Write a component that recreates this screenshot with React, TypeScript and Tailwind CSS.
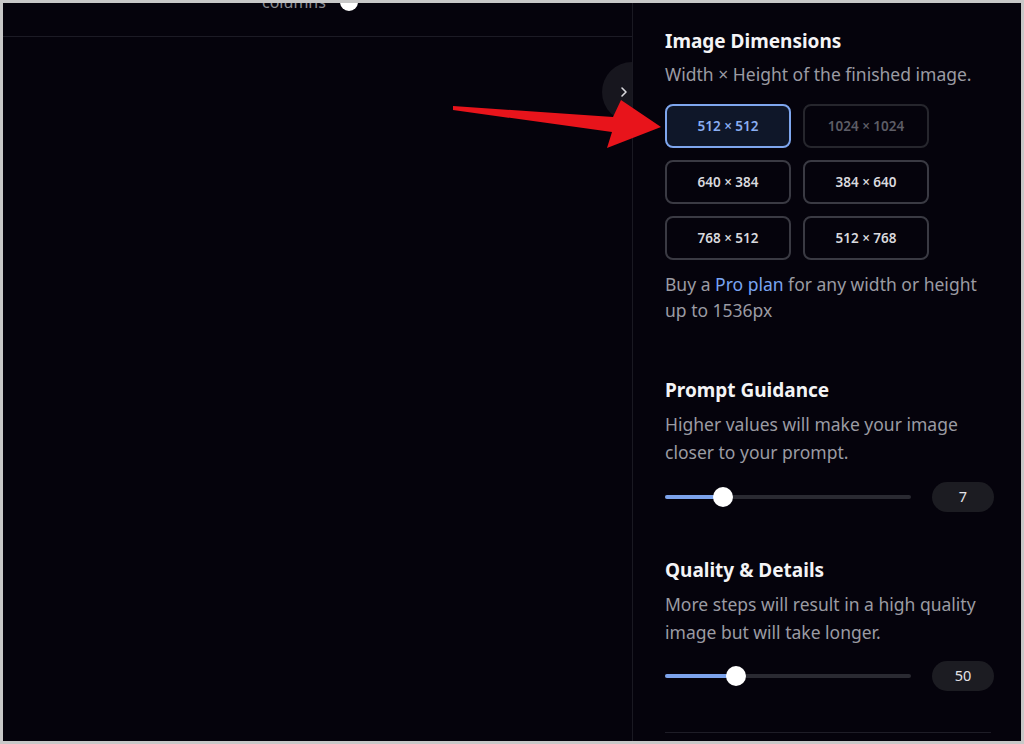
import React from "react";

const font = { fontFamily: '"Noto Sans", "Open Sans", sans-serif' };

function DimButton({ label, state }: { label: string; state: "selected" | "normal" | "disabled" }) {
  const cls =
    state === "selected"
      ? "border-[#7ea6ee] bg-[#0f1729] text-[#8aaef2]"
      : state === "disabled"
      ? "border-[#26262d] text-[#5d5d66]"
      : "border-[#3a3a43] text-[#d9d9de]";
  return (
    <div className={`h-[44px] w-[126px] rounded-[8px] border-2 flex items-center justify-center text-[13.5px] font-semibold ${cls}`}>
      {label}
    </div>
  );
}

function Slider({ fill, value }: { fill: number; value: string }) {
  return (
    <div className="flex items-center">
      <div className="relative w-[246px] h-5 flex items-center">
        <div className="w-full h-[4px] rounded-full bg-[#2a2a32]" />
        <div className="absolute left-0 top-[8px] h-[4px] rounded-full bg-[#7ca3ec]" style={{ width: fill }} />
        <div className="absolute top-0 w-5 h-5 rounded-full bg-white" style={{ left: fill - 10 }} />
      </div>
      <div className="ml-[21px] w-[62px] h-[30px] rounded-full bg-[#1c1c22] flex items-center justify-center text-[14.5px] text-[#e4e4e8]">
        {value}
      </div>
    </div>
  );
}

export default function App() {
  return (
    <div
      className="relative w-[1024px] h-[744px] border-[3px] border-[#c8c8c8] bg-[#05030c] flex overflow-hidden"
      style={font}
    >
      {/* Left area */}
      <div className="w-[629px] shrink-0 flex flex-col">
        <div className="h-[34px] border-b border-[#1c1b25] flex items-start overflow-hidden">
          <div className="ml-[259px] -mt-[13px] flex items-center">
            <span className="text-[16px] text-[#8c8c92]">columns</span>
            <div className="ml-[14px] w-[18px] h-[18px] rounded-full bg-white" />
          </div>
        </div>
        <div className="flex-1" />
      </div>

      {/* collapse button */}
      <div className="absolute left-[599px] top-[59px] w-[60px] h-[60px] rounded-full bg-[#17161e] flex items-center">
        <svg className="ml-[17px]" width="10" height="14" viewBox="0 0 10 14" fill="none">
          <path d="M3 3l4 4-4 4" stroke="#d8d8dc" strokeWidth="1.6" strokeLinecap="round" strokeLinejoin="round" />
        </svg>
      </div>

      {/* Right panel */}
      <div className="relative z-10 flex-1 min-w-0 bg-[#05030c] border-l border-[#1a1922] pl-[32px] pr-[27px] pt-[26px]">
        <div className="text-[19px] leading-[24px] font-bold text-[#f4f4f6]">Image Dimensions</div>
        <div className="mt-[8px] text-[17.5px] leading-[26px] text-[#9b9ba3]">Width × Height of the finished image.</div>
        <div className="mt-[17px] grid grid-cols-[126px_126px] gap-[12px]">
          <DimButton label="512 × 512" state="selected" />
          <DimButton label="1024 × 1024" state="disabled" />
          <DimButton label="640 × 384" state="normal" />
          <DimButton label="384 × 640" state="normal" />
          <DimButton label="768 × 512" state="normal" />
          <DimButton label="512 × 768" state="normal" />
        </div>
        <div className="mt-[11px] text-[17.5px] leading-[26px] text-[#9b9ba3] w-[325px]">
          Buy a <span className="text-[#7aa5f2]">Pro plan</span> for any width or height up to 1536px
        </div>

        <div className="mt-[55px] text-[19px] leading-[24px] font-bold text-[#f4f4f6]">Prompt Guidance</div>
        <div className="mt-[8px] text-[17.5px] leading-[28px] text-[#9b9ba3] w-[325px]">
          Higher values will make your image closer to your prompt.
        </div>
        <div className="mt-[16px]">
          <Slider fill={58} value="7" />
        </div>

        <div className="mt-[46px] text-[19px] leading-[24px] font-bold text-[#f4f4f6]">Quality &amp; Details</div>
        <div className="mt-[8px] text-[17.5px] leading-[28px] text-[#9b9ba3] w-[325px]">
          More steps will result in a high quality image but will take longer.
        </div>
        <div className="mt-[15px]">
          <Slider fill={71} value="50" />
        </div>
        <div className="mt-[41px] w-[326px] border-t border-[#1e1d27]" />
      </div>

      {/* annotation arrow */}
      <svg className="absolute left-0 top-0 z-20 pointer-events-none" width="1024" height="744" viewBox="0 0 1024 744">
        <polygon
          points="453,106 613,117 621,100 661,127 607,148 612,132 453,110"
          fill="#e8141b"
          transform="translate(-3,-3)"
        />
      </svg>
    </div>
  );
}
